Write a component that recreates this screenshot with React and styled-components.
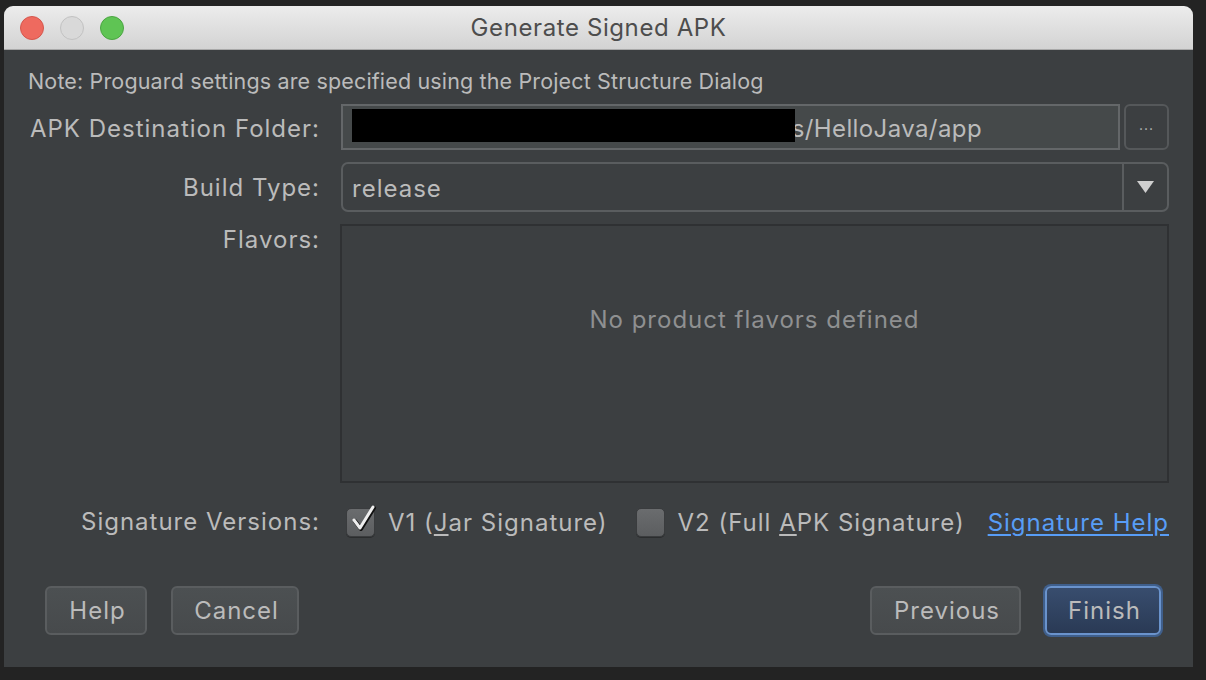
import React from "react";
import styled, { createGlobalStyle } from "styled-components";

const Global = createGlobalStyle`
  html, body { margin: 0; padding: 0; background: #222222; }
  body { font-family: Inter, "Noto Sans", "Liberation Sans", sans-serif; }
  * { box-sizing: border-box; }
`;

const Page = styled.div`
  width: 1206px;
  height: 680px;
  padding: 6px 13px 0 4px;
  background: #232323;
`;

const Window = styled.div`
  width: 1189px;
  height: 661px;
  background: #3c3f41;
  border-radius: 9px 9px 0 0;
  display: flex;
  flex-direction: column;
  overflow: hidden;
`;

const TitleBar = styled.div`
  height: 44px;
  flex: none;
  display: grid;
  grid-template-columns: 1fr auto 1fr;
  align-items: center;
  padding: 0 16px;
  background: linear-gradient(#ececec, #d3d3d3);
  border-bottom: 1px solid #a9a9a9;
`;

const Lights = styled.div`
  display: flex;
  gap: 16px;
  align-items: center;
`;

const Light = styled.span`
  width: 24px;
  height: 24px;
  border-radius: 50%;
  background: ${(p) => p.$bg};
  border: 1px solid ${(p) => p.$border};
`;

const Title = styled.div`
  font-size: 24px;
  color: #4d4d4d;
  letter-spacing: 0.6px;
`;

const Body = styled.div`
  flex: 1;
  display: flex;
  flex-direction: column;
  padding: 17px 24px 32px 24px;
  color: #bbbbbb;
  font-size: 24px;
  letter-spacing: 1px;
`;

const Note = styled.div`
  font-size: 21.5px;
  letter-spacing: 0.15px;
  line-height: 28px;
  color: #bbbbbb;
  margin-bottom: 9px;
`;

const Form = styled.div`
  display: grid;
  grid-template-columns: 291px 1fr;
  column-gap: 22px;
  row-gap: 12px;
  margin-top: ${(p) => p.$mt || "0"};
`;

const Label = styled.div`
  text-align: right;
  color: #bbbbbb;
  line-height: ${(p) => p.$lh || "46px"};
  align-self: ${(p) => p.$align || "center"};
  white-space: nowrap;
  margin-right: -1px;
  transform: translateY(${(p) => p.$dy || "0"});
`;

const FieldRow = styled.div`
  display: flex;
  gap: 4px;
  height: 46px;
`;

const TextField = styled.div`
  flex: 1;
  position: relative;
  background: #45494a;
  border: 2px solid #646769;
  display: flex;
  align-items: center;
  justify-content: flex-end;
  padding: 3px 136px 0 0;
  color: #bbbbbb;
  letter-spacing: 0.4px;
  white-space: nowrap;
`;

const Redact = styled.span`
  position: absolute;
  left: 9px;
  top: 3px;
  width: 443px;
  height: 33px;
  background: #000;
  z-index: 1;
`;

const BrowseButton = styled.button`
  width: 45px;
  background: #3c3f41;
  border: 2px solid #55585a;
  border-radius: 6px;
  color: #bbbbbb;
  font-family: inherit;
  font-size: 14px;
  letter-spacing: 1px;
  padding: 0 0 6px;
`;

const Combo = styled.div`
  height: 50px;
  display: flex;
  border: 2px solid #5a5d5f;
  border-radius: 7px;
  background: #3c3f41;
`;

const ComboValue = styled.div`
  flex: 1;
  display: flex;
  align-items: center;
  padding: 2px 0 0 9px;
  color: #bbbbbb;
  border-right: 2px solid #5a5d5f;
`;

const ComboArrow = styled.div`
  width: 43px;
  display: flex;
  align-items: center;
  justify-content: center;
`;

const FlavorBox = styled.div`
  height: 259px;
  margin-left: -1px;
  border: 2px solid #2f3133;
  display: flex;
  align-items: center;
  justify-content: center;
  color: #8f9091;
  padding-bottom: 68px;
`;

const SigRow = styled.div`
  display: flex;
  align-items: center;
  height: 40px;
  color: #bbbbbb;
  white-space: nowrap;
`;

const CheckItem = styled.label`
  display: flex;
  align-items: center;
  gap: 13px;
  margin-left: ${(p) => p.$ml || "0"};
`;

const Box = styled.span`
  position: relative;
  width: 29px;
  height: 29px;
  border-radius: 5px;
  background: linear-gradient(#6a6c6e, #5c5e60);
  border: 1px solid #3a3c3e;
  box-shadow: 0 1px 0 #2b2d2e;
`;

const Mark = styled.svg`
  position: absolute;
  left: 2px;
  top: -6px;
`;

const U = styled.span`
  text-decoration: underline;
  text-underline-offset: 3px;
`;

const Link = styled.a`
  margin-left: auto;
  color: #589df6;
  text-decoration: underline;
  text-underline-offset: 3px;
`;

const Buttons = styled.div`
  margin-top: auto;
  display: flex;
  align-items: center;
  padding-left: 17px;
  padding-right: 8px;
  gap: 24px;
`;

const Spacer = styled.div`
  flex: 1;
`;

const Button = styled.button`
  height: 49px;
  width: ${(p) => p.$w}px;
  border-radius: 6px;
  font-family: inherit;
  font-size: 24px;
  letter-spacing: 1px;
  color: #bbbbbb;
  background: ${(p) =>
    p.$primary ? "linear-gradient(#384d6e, #2a3a55)" : "linear-gradient(#4c5052, #474a4c)"};
  border: ${(p) => (p.$primary ? "2px solid #6a93cc" : "2px solid #5a5d5f")};
  box-shadow: ${(p) => (p.$primary ? "0 0 0 2px #3f5f8c" : "none")};
  padding: 0 0 0 3px;
`;

export default function App() {
  return (
    <>
      <Global />
      <Page>
        <Window>
          <TitleBar>
            <Lights>
              <Light $bg="#ee6a5f" $border="#d5574d" />
              <Light $bg="#d9d9d9" $border="#c2c2c2" />
              <Light $bg="#5fc454" $border="#4ba542" />
            </Lights>
            <Title>Generate Signed APK</Title>
            <div />
          </TitleBar>
          <Body>
            <Note>Note: Proguard settings are specified using the Project Structure Dialog</Note>
            <Form>
              <Label $dy="2px">APK Destination Folder:</Label>
              <FieldRow>
                <TextField>
                  <Redact />
                  s/HelloJava/app
                </TextField>
                <BrowseButton>...</BrowseButton>
              </FieldRow>

              <Label $lh="50px" $dy="1px">Build Type:</Label>
              <Combo>
                <ComboValue>release</ComboValue>
                <ComboArrow>
                  <svg width="17" height="12" viewBox="0 0 17 12">
                    <path d="M0 0 H17 L8.5 12 Z" fill="#cfcfcf" />
                  </svg>
                </ComboArrow>
              </Combo>

              <Label $lh="32px" $align="start">Flavors:</Label>
              <FlavorBox>No product flavors defined</FlavorBox>
            </Form>
            <Form $mt="19px">
              <Label $lh="40px">Signature Versions:</Label>
              <SigRow>
                <CheckItem $ml="5px">
                  <Box>
                    <Mark width="28" height="30" viewBox="0 0 28 30">
                      <path d="M5 17 L11 25 L24 4" fill="none" stroke="#111" strokeWidth="4" strokeLinecap="round" strokeLinejoin="round" transform="translate(1 1)" />
                      <path d="M5 17 L11 25 L24 4" fill="none" stroke="#eeeeee" strokeWidth="3" strokeLinecap="round" strokeLinejoin="round" />
                    </Mark>
                  </Box>
                  <span>V1 (<U>J</U>ar Signature)</span>
                </CheckItem>
                <CheckItem $ml="28px">
                  <Box />
                  <span>V2 (Full <U>A</U>PK Signature)</span>
                </CheckItem>
                <Link>Signature Help</Link>
              </SigRow>
            </Form>
            <Buttons>
              <Button $w={102}>Help</Button>
              <Button $w={128}>Cancel</Button>
              <Spacer />
              <Button $w={151}>Previous</Button>
              <Button $w={116} $primary>Finish</Button>
            </Buttons>
          </Body>
        </Window>
      </Page>
    </>
  );
}
